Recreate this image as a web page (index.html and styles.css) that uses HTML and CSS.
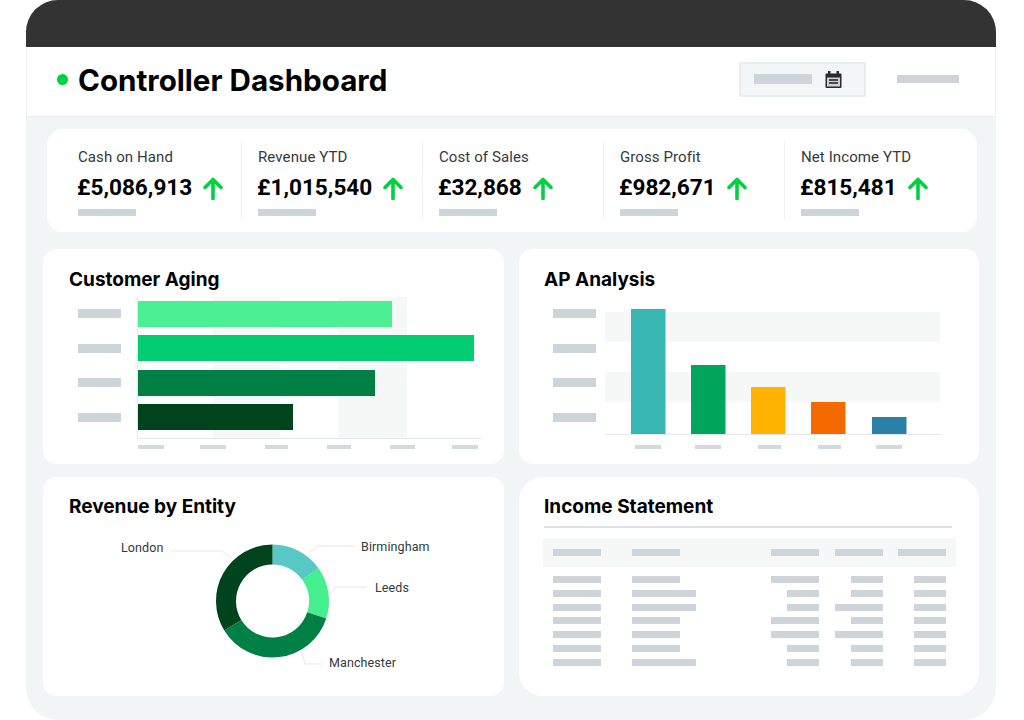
FILE: index.html
```html
<!DOCTYPE html>
<html lang="en">
<head>
    <meta charset="UTF-8">
    <meta name="viewport" content="width=device-width, initial-scale=1.0">
    <title>Controller Dashboard</title>
    <link rel="stylesheet" href="styles.css">
</head>
<body>
    <div class="frame">
        <div class="topbar"></div>

        <header class="page-header">
            <span class="dot"></span>
            <h1>Controller Dashboard</h1>
            <div class="date-box">
                <span class="skel date-skel"></span>
                <svg class="cal-icon" width="17" height="17" viewBox="0 0 17 17">
                    <rect class="cal-body" x="0.5" y="2.5" width="16" height="14.5" rx="1"/>
                    <rect class="cal-body" x="3" y="0" width="2.5" height="4"/>
                    <rect class="cal-body" x="11.5" y="0" width="2.5" height="4"/>
                    <rect class="cal-face" x="2" y="6.5" width="13" height="9"/>
                    <rect class="cal-cell" x="4" y="8" width="9" height="2"/>
                    <rect class="cal-cell" x="4" y="11" width="9" height="2"/>
                </svg>
            </div>
            <span class="skel user-skel"></span>
        </header>

        <main class="content">
            <!-- KPI strip -->
            <section class="kpi-strip">
                <div class="kpi">
                    <div class="kpi-label">Cash on Hand</div>
                    <div class="kpi-value">£5,086,913
                        <svg class="arrow" width="20" height="23" viewBox="0 0 20 23"><path d="M10 21.5V2.5M2 10.5l8-8 8 8"/></svg>
                    </div>
                    <span class="skel kpi-skel"></span>
                </div>
                <div class="kpi">
                    <div class="kpi-label">Revenue YTD</div>
                    <div class="kpi-value">£1,015,540
                        <svg class="arrow" width="20" height="23" viewBox="0 0 20 23"><path d="M10 21.5V2.5M2 10.5l8-8 8 8"/></svg>
                    </div>
                    <span class="skel kpi-skel"></span>
                </div>
                <div class="kpi">
                    <div class="kpi-label">Cost of Sales</div>
                    <div class="kpi-value">£32,868
                        <svg class="arrow" width="20" height="23" viewBox="0 0 20 23"><path d="M10 21.5V2.5M2 10.5l8-8 8 8"/></svg>
                    </div>
                    <span class="skel kpi-skel"></span>
                </div>
                <div class="kpi">
                    <div class="kpi-label">Gross Profit</div>
                    <div class="kpi-value">£982,671
                        <svg class="arrow" width="20" height="23" viewBox="0 0 20 23"><path d="M10 21.5V2.5M2 10.5l8-8 8 8"/></svg>
                    </div>
                    <span class="skel kpi-skel"></span>
                </div>
                <div class="kpi">
                    <div class="kpi-label">Net Income YTD</div>
                    <div class="kpi-value">£815,481
                        <svg class="arrow" width="20" height="23" viewBox="0 0 20 23"><path d="M10 21.5V2.5M2 10.5l8-8 8 8"/></svg>
                    </div>
                    <span class="skel kpi-skel"></span>
                </div>
            </section>

            <section class="cards">
                <!-- Customer Aging -->
                <div class="card">
                    <h2>Customer Aging</h2>
                    <svg class="chart" width="461" height="170" viewBox="0 0 461 170">
                        <rect class="band" x="170" y="6" width="67" height="141"/>
                        <rect class="band" x="295" y="6" width="69" height="141"/>
                        <path class="axis" d="M94.5 6V147.5H439"/>
                        <rect class="bar-aging-1" x="95" y="10" width="254" height="26"/>
                        <rect class="bar-aging-2" x="95" y="44" width="336" height="26"/>
                        <rect class="bar-aging-3" x="95" y="79" width="237" height="26"/>
                        <rect class="bar-aging-4" x="95" y="113" width="155" height="26"/>
                        <rect class="skel-fill" x="35" y="18" width="43" height="9"/>
                        <rect class="skel-fill" x="35" y="53" width="43" height="9"/>
                        <rect class="skel-fill" x="35" y="87" width="43" height="9"/>
                        <rect class="skel-fill" x="35" y="122" width="43" height="9"/>
                        <rect class="tick" x="95" y="154" width="26" height="4"/>
                        <rect class="tick" x="157" y="154" width="26" height="4"/>
                        <rect class="tick" x="222" y="154" width="23" height="4"/>
                        <rect class="tick" x="284" y="154" width="24" height="4"/>
                        <rect class="tick" x="347" y="154" width="25" height="4"/>
                        <rect class="tick" x="409" y="154" width="26" height="4"/>
                    </svg>
                </div>

                <!-- AP Analysis -->
                <div class="card">
                    <h2>AP Analysis</h2>
                    <svg class="chart" width="460" height="170" viewBox="0 0 460 170">
                        <rect class="band" x="86" y="21" width="335" height="30"/>
                        <rect class="band" x="86" y="81" width="335" height="30"/>
                        <path class="axis" d="M86 143.5H421"/>
                        <rect class="bar-ap-1" x="112" y="18" width="34.5" height="125"/>
                        <rect class="bar-ap-2" x="172" y="74" width="34.5" height="69"/>
                        <rect class="bar-ap-3" x="232" y="96" width="34.5" height="47"/>
                        <rect class="bar-ap-4" x="292" y="111" width="34.5" height="32"/>
                        <rect class="bar-ap-5" x="353" y="126" width="34.5" height="17"/>
                        <rect class="skel-fill" x="34" y="18" width="43" height="9"/>
                        <rect class="skel-fill" x="34" y="53" width="43" height="9"/>
                        <rect class="skel-fill" x="34" y="87" width="43" height="9"/>
                        <rect class="skel-fill" x="34" y="122" width="43" height="9"/>
                        <rect class="tick" x="116" y="154" width="26" height="4"/>
                        <rect class="tick" x="176" y="154" width="26" height="4"/>
                        <rect class="tick" x="239" y="154" width="23" height="4"/>
                        <rect class="tick" x="299" y="154" width="23" height="4"/>
                        <rect class="tick" x="357" y="154" width="26" height="4"/>
                    </svg>
                </div>

                <!-- Revenue by Entity -->
                <div class="card card-low">
                    <h2>Revenue by Entity</h2>
                    <svg class="chart" width="461" height="178" viewBox="0 0 461 178">
                        <path class="leader" d="M127.7 33H178.7L188.7 40"/>
                        <path class="leader" d="M312 28H275L265 35"/>
                        <path class="leader" d="M323.7 69H292L287 77"/>
                        <path class="leader" d="M258.7 133.7L262 146H280"/>
                        <g class="donut">
                            <path class="slice-1" d="M229.5 36.5A46.5 46.5 0 0 1 267.36 56"/>
                            <path class="slice-2" d="M267.36 56A46.5 46.5 0 0 1 273.73 97.37"/>
                            <path class="slice-3" d="M273.73 97.37A46.5 46.5 0 0 1 189.81 107.23"/>
                            <path class="slice-4" d="M189.81 107.23A46.5 46.5 0 0 1 229.5 36.5"/>
                        </g>
                        <text class="donut-label" x="78" y="34">London</text>
                        <text class="donut-label" x="318" y="33">Birmingham</text>
                        <text class="donut-label" x="332" y="74">Leeds</text>
                        <text class="donut-label" x="286" y="149">Manchester</text>
                    </svg>
                </div>

                <!-- Income Statement -->
                <div class="card card-low card-round">
                    <h2>Income Statement</h2>
                    <div class="rule"></div>
                    <div class="stmt">
                        <div class="stmt-row stmt-head">
                            <span class="skel sk-m"></span><span class="skel sk-m"></span><span class="skel sk-m"></span><span class="skel sk-m"></span><span class="skel sk-m"></span>
                        </div>
                        <div class="stmt-body">
                            <div class="stmt-row"><span class="skel sk-m"></span><span class="skel sk-m"></span><span class="skel sk-m"></span><span class="skel sk-s"></span><span class="skel sk-s"></span></div>
                            <div class="stmt-row"><span class="skel sk-m"></span><span class="skel sk-l"></span><span class="skel sk-s"></span><span class="skel sk-s"></span><span class="skel sk-s"></span></div>
                            <div class="stmt-row"><span class="skel sk-m"></span><span class="skel sk-l"></span><span class="skel sk-s"></span><span class="skel sk-m"></span><span class="skel sk-s"></span></div>
                            <div class="stmt-row"><span class="skel sk-m"></span><span class="skel sk-m"></span><span class="skel sk-m"></span><span class="skel sk-s"></span><span class="skel sk-s"></span></div>
                            <div class="stmt-row"><span class="skel sk-m"></span><span class="skel sk-m"></span><span class="skel sk-m"></span><span class="skel sk-m"></span><span class="skel sk-s"></span></div>
                            <div class="stmt-row"><span class="skel sk-m"></span><span class="skel sk-m"></span><span class="skel sk-s"></span><span class="skel sk-s"></span><span class="skel sk-s"></span></div>
                            <div class="stmt-row"><span class="skel sk-m"></span><span class="skel sk-l"></span><span class="skel sk-s"></span><span class="skel sk-s"></span><span class="skel sk-s"></span></div>
                        </div>
                    </div>
                </div>
            </section>
        </main>
    </div>
</body>
</html>
```

FILE: styles.css
```css
* {
    box-sizing: border-box;
}
body {
    font-family: Inter, 'Liberation Sans', sans-serif;
    margin: 0;
    background: #ffffff;
    color: #000000;
}
.frame {
    width: 970px;
    height: 720px;
    margin-left: 26px;
    border-radius: 32px;
    overflow: hidden;
    background: #f1f5f6;
    display: flex;
    flex-direction: column;
}
.topbar {
    height: 47px;
    background-color: #333333;
}

/* header */
.page-header {
    height: 70px;
    background: #ffffff;
    border-bottom: 1px solid #e8edef;
    border-left: 1px solid #eef1f2;
    border-right: 1px solid #eef1f2;
    display: flex;
    align-items: center;
    padding: 0 36px 5px 30px;
}
.dot {
    width: 11px;
    height: 11px;
    border-radius: 50%;
    background: #00d13f;
    margin-right: 10px;
}
.page-header h1 {
    margin: 2px 0 0;
    font-size: 29.6px;
    line-height: 36px;
    font-weight: 700;
}
.date-box {
    margin-left: auto;
    width: 127px;
    height: 35px;
    background: #f3f6f7;
    border: 2px solid #e8edf0;
    display: flex;
    align-items: center;
    padding-left: 13px;
    gap: 13px;
}
.cal-icon {
    display: block;
}
.cal-body {
    fill: #2b2b2b;
}
.cal-face {
    fill: #cfcfcf;
}
.cal-cell {
    fill: #4a4a4a;
}
.skel {
    display: block;
    background: #cdd5db;
}
.date-skel {
    width: 58px;
    height: 10px;
}
.user-skel {
    width: 62px;
    height: 8px;
    margin-left: 31px;
}

/* main area */
.content {
    flex: 1;
    padding: 12px 17px 0;
}
.kpi-strip {
    height: 103px;
    margin: 0 2px 0 4px;
    padding: 12px 0 12px 14px;
    background: #ffffff;
    border-radius: 16px;
    display: grid;
    grid-template-columns: repeat(5, 181px);
}
.kpi {
    padding-left: 16px;
    border-right: 1px solid #eff2f4;
}
.kpi:first-child {
    padding-left: 17px;
}
.kpi:last-child {
    border-right: none;
}
.kpi-label {
    font-family: Roboto, sans-serif;
    font-size: 15px;
    letter-spacing: 0.1px;
    line-height: 18px;
    color: #333a40;
    margin-top: 7px;
}
.kpi-value {
    font-family: Roboto, sans-serif;
    font-size: 22.6px;
    font-weight: 700;
    line-height: 28px;
    margin: 8px 0 0 -1px;
    display: flex;
    align-items: center;
    gap: 11px;
}
.arrow path {
    fill: none;
    stroke: #00d13f;
    stroke-width: 3.6;
    stroke-linecap: round;
    stroke-linejoin: round;
}
.kpi-skel {
    width: 58px;
    height: 7px;
    margin-top: 7px;
}

/* cards */
.cards {
    margin-top: 17px;
    display: grid;
    grid-template-columns: 461px 460px;
    grid-template-rows: 215px 219px;
    column-gap: 15px;
    row-gap: 13px;
}
.card {
    background: #ffffff;
    border-radius: 14px;
    padding-top: 18px;
}
.card-low {
    padding-top: 17px;
}
.card-round {
    border-radius: 24px;
}
.card h2 {
    margin: 0 0 -1px 26px;
    padding-top: 1px;
    font-size: 19px;
    line-height: 24px;
    font-weight: 700;
}
.card:nth-child(even) h2 {
    margin-left: 25px;
}
.chart {
    display: block;
}
.band {
    fill: #f6f7f7;
}
.axis, .leader {
    fill: none;
    stroke: #e3e8ec;
    stroke-width: 1;
}
.skel-fill {
    fill: #cdd5db;
}
.tick {
    fill: #d3dade;
}
.bar-aging-1 { fill: #4af093; }
.bar-aging-2 { fill: #00cc70; }
.bar-aging-3 { fill: #008044; }
.bar-aging-4 { fill: #00441d; }
.bar-ap-1 { fill: #38b6b2; }
.bar-ap-2 { fill: #00a65c; }
.bar-ap-3 { fill: #ffb300; }
.bar-ap-4 { fill: #f46a00; }
.bar-ap-5 { fill: #2b80a8; }

/* donut */
.donut path {
    fill: none;
    stroke-width: 20;
}
.slice-1 { stroke: #58c8c4; }
.slice-2 { stroke: #45ee8e; }
.slice-3 { stroke: #008044; }
.slice-4 { stroke: #00441d; }
.donut-label {
    font-family: Roboto, sans-serif;
    font-size: 12.5px;
    letter-spacing: 0.1px;
    fill: #333a40;
}

/* income statement */
.rule {
    height: 2px;
    margin: 8px 27px 0 25px;
    background: #dde1e6;
}
.stmt {
    width: 413px;
    margin: 10px 0 0 24px;
}
.stmt-row {
    display: grid;
    grid-template-columns: 79px 110px 77px 64px 63px;
    padding: 0 10px;
    height: 7px;
}
.stmt-row .skel:nth-child(n+3) {
    justify-self: end;
}
.stmt-head {
    height: 29px;
    background: #f6f7f7;
    align-items: center;
}
.stmt-body {
    margin-top: 9px;
    display: flex;
    flex-direction: column;
    gap: 6.83px;
}
.sk-s, .sk-m, .sk-l {
    height: 7px;
}
.sk-s {
    width: 32px;
}
.sk-m {
    width: 48px;
}
.sk-l {
    width: 64px;
}
```
